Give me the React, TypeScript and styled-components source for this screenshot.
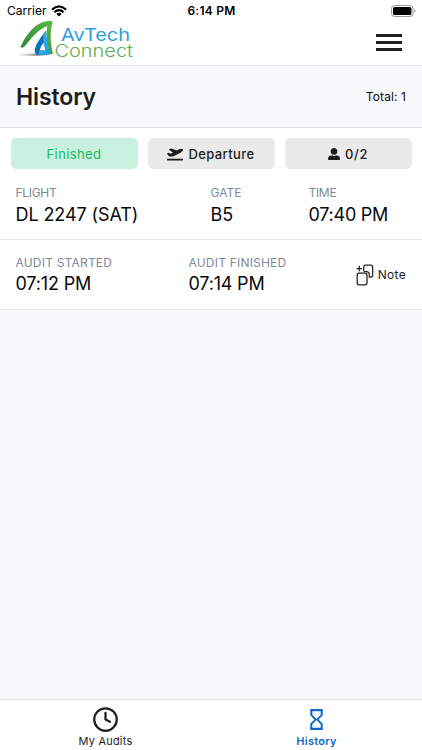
import React from "react";
import styled, { createGlobalStyle } from "styled-components";
import { MdHourglassEmpty } from "react-icons/md";
import { FaPlaneDeparture, FaUserAlt } from "react-icons/fa";
import { Clock } from "lucide-react";

const GlobalStyle = createGlobalStyle`
  * { box-sizing: border-box; }
  body { margin: 0; background: #f8f9fb; font-family: Inter, "Liberation Sans", sans-serif; color: #1d1d20; }
`;

const Screen = styled.div`
  display: flex;
  flex-direction: column;
  width: 422px;
  height: 750px;
  overflow: hidden;
  background: #f8f9fb;
`;

const Label = styled.span<{ $size: number; $space?: number; $weight?: number; $color?: string; $line?: number }>`
  display: block;
  white-space: nowrap;
  font-size: ${(p) => p.$size}px;
  letter-spacing: ${(p) => p.$space ?? 0}px;
  font-weight: ${(p) => p.$weight ?? 400};
  color: ${(p) => p.$color ?? "inherit"};
  line-height: ${(p) => p.$line ?? 20}px;
`;

const StatusBar = styled.div`
  display: grid;
  grid-template-columns: 1fr auto 1fr;
  align-items: center;
  height: 21px;
  padding: 0 6px 0 7px;
  background: #fff;
  color: #000;
`;
const Carrier = styled.div`
  display: flex;
  align-items: center;
  gap: 4px;
`;
const BatterySlot = styled.div`
  display: flex;
  justify-content: flex-end;
`;

const Header = styled.header`
  display: flex;
  justify-content: space-between;
  height: 45px;
  padding: 0 20px 0 16px;
  background: #fff;
  border-bottom: 1px solid #e4e5e8;
`;
const Logo = styled.svg`
  display: block;
  width: 120px;
  height: 40px;
  overflow: visible;
  margin-top: -2px;
`;
const MenuButton = styled.button`
  display: flex;
  flex-direction: column;
  gap: 4px;
  margin: 13px 0 0;
  padding: 0;
  border: 0;
  background: none;
  height: 18px;
`;
const MenuLine = styled.span`
  width: 26px;
  height: 3px;
  background: #1e1e1e;
`;

const TitleBar = styled.div`
  display: flex;
  align-items: center;
  justify-content: space-between;
  height: 62px;
  padding: 0 16px;
  border-bottom: 1px solid #e0e2e8;
`;

const Card = styled.section`
  height: 182px;
  background: #fff;
  border-bottom: 1px solid #e4e6ea;
`;
const Chips = styled.div`
  display: grid;
  grid-template-columns: repeat(3, 127px);
  gap: 10px;
  padding: 10px 10px 0 10.500px;
`;
const Chip = styled.div<{ $done?: boolean }>`
  display: flex;
  align-items: center;
  justify-content: center;
  gap: 5px;
  height: 31px;
  border-radius: 5px;
  background: ${(p) => (p.$done ? "#caf1df" : "#eaeaea")};
  color: ${(p) => (p.$done ? "#16b864" : "#1d1d20")};
`;
const FlightRow = styled.div`
  display: grid;
  grid-template-columns: 195px 98px 1fr;
  height: 71px;
  padding: 14px 16px 0 15.500px;
  border-bottom: 1px solid #e9eaec;
`;
const AuditRow = styled.div`
  display: grid;
  grid-template-columns: 173px 1fr auto;
  padding: 13px 16px 0 15.500px;
`;
const NoteButton = styled.div`
  display: flex;
  gap: 4px;
  padding-top: 11px;
`;

const TabBar = styled.nav`
  display: grid;
  grid-template-columns: 1fr 1fr;
  height: 51px;
  margin-top: auto;
  background: #fff;
  border-top: 1px solid #e0e2e6;
`;
const Tab = styled.div<{ $active?: boolean }>`
  display: flex;
  flex-direction: column;
  align-items: center;
  padding-top: 6px;
  color: ${(p) => (p.$active ? "#1368c4" : "#1d1d20")};
`;
const TabIcon = styled.div`
  display: flex;
  align-items: center;
  height: 26px;
`;

type FieldProps = {
  name: string;
  value: string;
  nameSpace: number;
  valueSpace: number;
  nameWeight?: number;
  valueLine?: number;
};

const Field = ({ name, value, nameSpace, valueSpace, nameWeight = 400, valueLine = 23 }: FieldProps) => (
  <div>
    <Label $size={12} $space={nameSpace} $weight={nameWeight} $color="#81889a" $line={19}>{name}</Label>
    <Label $size={18} $space={valueSpace} $color="#09090b" $line={valueLine}>{value}</Label>
  </div>
);

const WifiIcon = () => (
  <svg width="16" height="12" viewBox="0 0 16 12" fill="none">
    <path d="M.9 4.700Q8-2 15.100 4.700" stroke="#000" strokeWidth="2.200" />
    <path d="M3.400 7.200Q8 3 12.600 7.200" stroke="#000" strokeWidth="2" />
    <path d="M5.400 9Q8 6.700 10.600 9L8 11.600Z" fill="#000" />
  </svg>
);

const BatteryIcon = () => (
  <svg width="25" height="12" viewBox="0 0 25 12">
    <rect x=".5" y=".5" width="21.400" height="11" rx="3" fill="#fff" stroke="#999" />
    <rect x="2" y="2" width="18.400" height="8" rx="1.600" fill="#000" />
    <path d="M23.200 4.200q1.400.6 1.400 1.800t-1.400 1.800z" fill="#999" />
  </svg>
);

const BrandLogo = () => (
  <Logo viewBox="0 0 120 40" role="img">
    <defs>
      <linearGradient id="leaf" x1="0" y1="1" x2="1" y2="0">
        <stop offset="0" stopColor="#26843a" />
        <stop offset="1" stopColor="#62b847" />
      </linearGradient>
      <linearGradient id="drop" x1="0" y1="0" x2="1" y2="1">
        <stop offset="0" stopColor="#45bcef" />
        <stop offset="1" stopColor="#159bd7" />
      </linearGradient>
      <linearGradient id="shade" x1="0" x2="1">
        <stop offset="0" stopColor="#aaa" stopOpacity=".1" />
        <stop offset=".7" stopColor="#777" stopOpacity=".9" />
        <stop offset="1" stopColor="#888" stopOpacity=".1" />
      </linearGradient>
    </defs>
    <ellipse cx="17" cy="35.700" rx="16" ry="1.200" fill="url(#shade)" />
    <path d="M4.500 28C9 17 18 4.500 30 2.200Q36.500 .8 36.700 3C34 12 34 24 37 34.500L34.700 35.300C30.500 25 29.800 16 31.300 7C23 10 15 19 9.500 26.600Q6.500 30 4.500 28Z" fill="url(#leaf)" />
    <path d="M30 11.500C25 18 19.500 25 18.700 31.500Q18.600 35.600 22 35.800L34.500 35.400C31.500 27 30.300 20 30 11.500ZM27.700 23.500Q28.500 28 29.800 31.500H23.700Q24.500 27.500 27.700 23.500Z" fill="#0873b5" fillRule="evenodd" />
    <path d="M30 11.500C30 20 31.500 28 34.700 35L22 35.800Q23 33.500 24 31.500H29.800Q27.500 26.500 27.300 17Z" fill="url(#drop)" />
    <text x="45" y="22" fontFamily="Inter, sans-serif" fontSize="17" textLength="69" lengthAdjust="spacingAndGlyphs" fill="#2ba1dc">AvTech</text>
    <text x="38.500" y="37.500" fontFamily="Inter, sans-serif" fontWeight="300" fontSize="17" textLength="78.500" lengthAdjust="spacingAndGlyphs" fill="#5eae50">Connect</text>
  </Logo>
);

const NoteIcon = () => (
  <svg width="18" height="22" viewBox="0 0 18 22" fill="none" stroke="#222" strokeWidth="1.250">
    <path d="M3.300 1.800V7.200M.6 4.500H6" />
    <path d="M7.700 7V3.200Q7.700 1.200 9.700 1.200H14.700Q16.700 1.200 16.700 3.200V11Q16.700 13 14.700 13H13.300V10.500Q13.300 7.500 10.300 7.500H7.700" />
    <rect x="1.200" y="9.200" width="9.800" height="11.600" rx="2" />
  </svg>
);

export default function App() {
  return (
    <>
      <GlobalStyle />
      <Screen>
        <StatusBar>
          <Carrier>
            <Label $size={12} $space={0.05}>Carrier</Label>
            <WifiIcon />
          </Carrier>
          <Label $size={12} $weight={600} $space={0.25}>6:14 PM</Label>
          <BatterySlot><BatteryIcon /></BatterySlot>
        </StatusBar>
        <Header>
          <BrandLogo />
          <MenuButton aria-label="Menu"><MenuLine /><MenuLine /><MenuLine /></MenuButton>
        </Header>
        <TitleBar>
          <Label $size={23} $weight={600} $space={-0.1} $line={30}>History</Label>
          <Label $size={12} $space={0.1} $color="#09090b">Total: 1</Label>
        </TitleBar>
        <Card>
          <Chips>
            <Chip $done><Label $size={13} $space={0.4}>Finished</Label></Chip>
            <Chip><FaPlaneDeparture size={16} /><Label $size={13} $space={0.4} $weight={500}>Departure</Label></Chip>
            <Chip><FaUserAlt size={12} /><Label $size={13} $space={0.6} $weight={500}>0/2</Label></Chip>
          </Chips>
          <FlightRow>
            <Field name="FLIGHT" value="DL 2247 (SAT)" nameSpace={-0.3} valueSpace={-0.1} valueLine={25} />
            <Field name="GATE" value="B5" nameSpace={0} valueSpace={0} valueLine={25} />
            <Field name="TIME" value="07:40 PM" nameSpace={-0.3} valueSpace={-0.25} valueLine={25} />
          </FlightRow>
          <AuditRow>
            <Field name="AUDIT STARTED" value="07:12 PM" nameSpace={0.2} valueSpace={-0.15} />
            <Field name="AUDIT FINISHED" value="07:14 PM" nameSpace={0.2} valueSpace={-0.2} />
            <NoteButton><NoteIcon /><Label $size={12} $space={0.3} $line={22}>Note</Label></NoteButton>
          </AuditRow>
        </Card>
        <TabBar>
          <Tab>
            <TabIcon><Clock size={27} strokeWidth={2} /></TabIcon>
            <Label $size={11} $space={0.2} $line={19}>My Audits</Label>
          </Tab>
          <Tab $active>
            <TabIcon><MdHourglassEmpty size={25} /></TabIcon>
            <Label $size={11} $space={0.25} $weight={600} $line={19}>History</Label>
          </Tab>
        </TabBar>
      </Screen>
    </>
  );
}
